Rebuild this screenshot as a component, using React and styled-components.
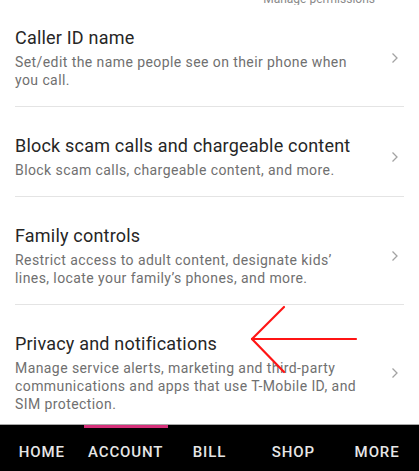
import React from 'react';
import styled, { createGlobalStyle } from 'styled-components';

const GlobalStyle = createGlobalStyle`
  html, body {
    margin: 0;
    padding: 0;
    background: #ffffff;
  }
  body {
    font-family: Roboto, "Liberation Sans", Arial, sans-serif;
  }
`;

const Page = styled.div`
  position: relative;
  height: 100vh;
  display: flex;
  flex-direction: column;
  overflow: hidden;
  background: #ffffff;
`;

const List = styled.div`
  flex: 1;
  overflow: hidden;
`;

const TopStrip = styled.div`
  height: 5px;
  overflow: hidden;
  display: flex;
  justify-content: flex-end;
  align-items: flex-end;
  padding-right: 44px;
`;

const TopText = styled.span`
  font-size: 12px;
  line-height: 12px;
  color: #8a8a8a;
  white-space: nowrap;
`;

const Row = styled.div`
  margin: 0 15px;
  padding: ${(p) => (p.first ? '21px' : '27px')} 0 17px;
  border-bottom: 1px solid #e4e4e4;
  display: flex;
  align-items: center;
  justify-content: space-between;
`;

const Texts = styled.div`
  width: 352px;
  display: flex;
  flex-direction: column;
  gap: 3px;
`;

const Title = styled.div`
  font-size: 18px;
  line-height: 24px;
  letter-spacing: 0.2px;
  color: #262626;
`;

const Subtitle = styled.div`
  font-size: 14px;
  line-height: 18px;
  letter-spacing: 0.42px;
  color: #707070;
`;

const Chevron = styled.svg`
  width: 8px;
  height: 12px;
  margin-right: 5px;
  flex-shrink: 0;
`;

const Nav = styled.nav`
  height: 46px;
  border-top: 1px solid #a8a8a8;
  background: #000000;
  display: grid;
  grid-template-columns: repeat(5, 1fr);
`;

const Tab = styled.div`
  border-top: 3px solid ${(p) => (p.active ? '#d5307a' : 'transparent')};
  display: flex;
  align-items: center;
  justify-content: center;
  padding-top: 4px;
  font-size: 15px;
  font-weight: 500;
  letter-spacing: 0.9px;
  color: #e6e6e6;
`;

const Arrow = styled.svg`
  position: absolute;
  left: 250px;
  top: 305px;
  width: 108px;
  height: 70px;
  pointer-events: none;
`;

const items = [
  {
    title: 'Caller ID name',
    text: 'Set/edit the name people see on their phone when you call.',
  },
  {
    title: 'Block scam calls and chargeable content',
    text: 'Block scam calls, chargeable content, and more.',
  },
  {
    title: 'Family controls',
    text: 'Restrict access to adult content, designate kids\u2019 lines, locate your family\u2019s phones, and more.',
  },
  {
    title: 'Privacy and notifications',
    text: 'Manage service alerts, marketing and third-party communications and apps that use T-Mobile ID, and SIM protection.',
  },
];

const tabs = ['HOME', 'ACCOUNT', 'BILL', 'SHOP', 'MORE'];

const ChevronIcon = () => (
  <Chevron viewBox="0 0 8 12">
    <path d="M1.5 1.5 L6 6 L1.5 10.5" fill="none" stroke="#a3a3a3" strokeWidth="1.3" />
  </Chevron>
);

const App = () => {
  return (
    <Page>
      <GlobalStyle />
      <List>
        <TopStrip>
          <TopText>Manage permissions</TopText>
        </TopStrip>
        {items.map((item, i) => (
          <Row key={item.title} first={i === 0}>
            <Texts>
              <Title>{item.title}</Title>
              <Subtitle>{item.text}</Subtitle>
            </Texts>
            <ChevronIcon />
          </Row>
        ))}
      </List>
      <Nav>
        {tabs.map((t) => (
          <Tab key={t} active={t === 'ACCOUNT'}>
            {t}
          </Tab>
        ))}
      </Nav>
      <Arrow viewBox="0 0 108 70">
        <g fill="none" stroke="#ff1414" strokeWidth="2.2" strokeLinecap="round">
          <line x1="2" y1="34" x2="106" y2="34" />
          <line x1="2" y1="34" x2="34" y2="2" />
          <line x1="2" y1="34" x2="34" y2="67" />
        </g>
      </Arrow>
    </Page>
  );
};

export default App;
